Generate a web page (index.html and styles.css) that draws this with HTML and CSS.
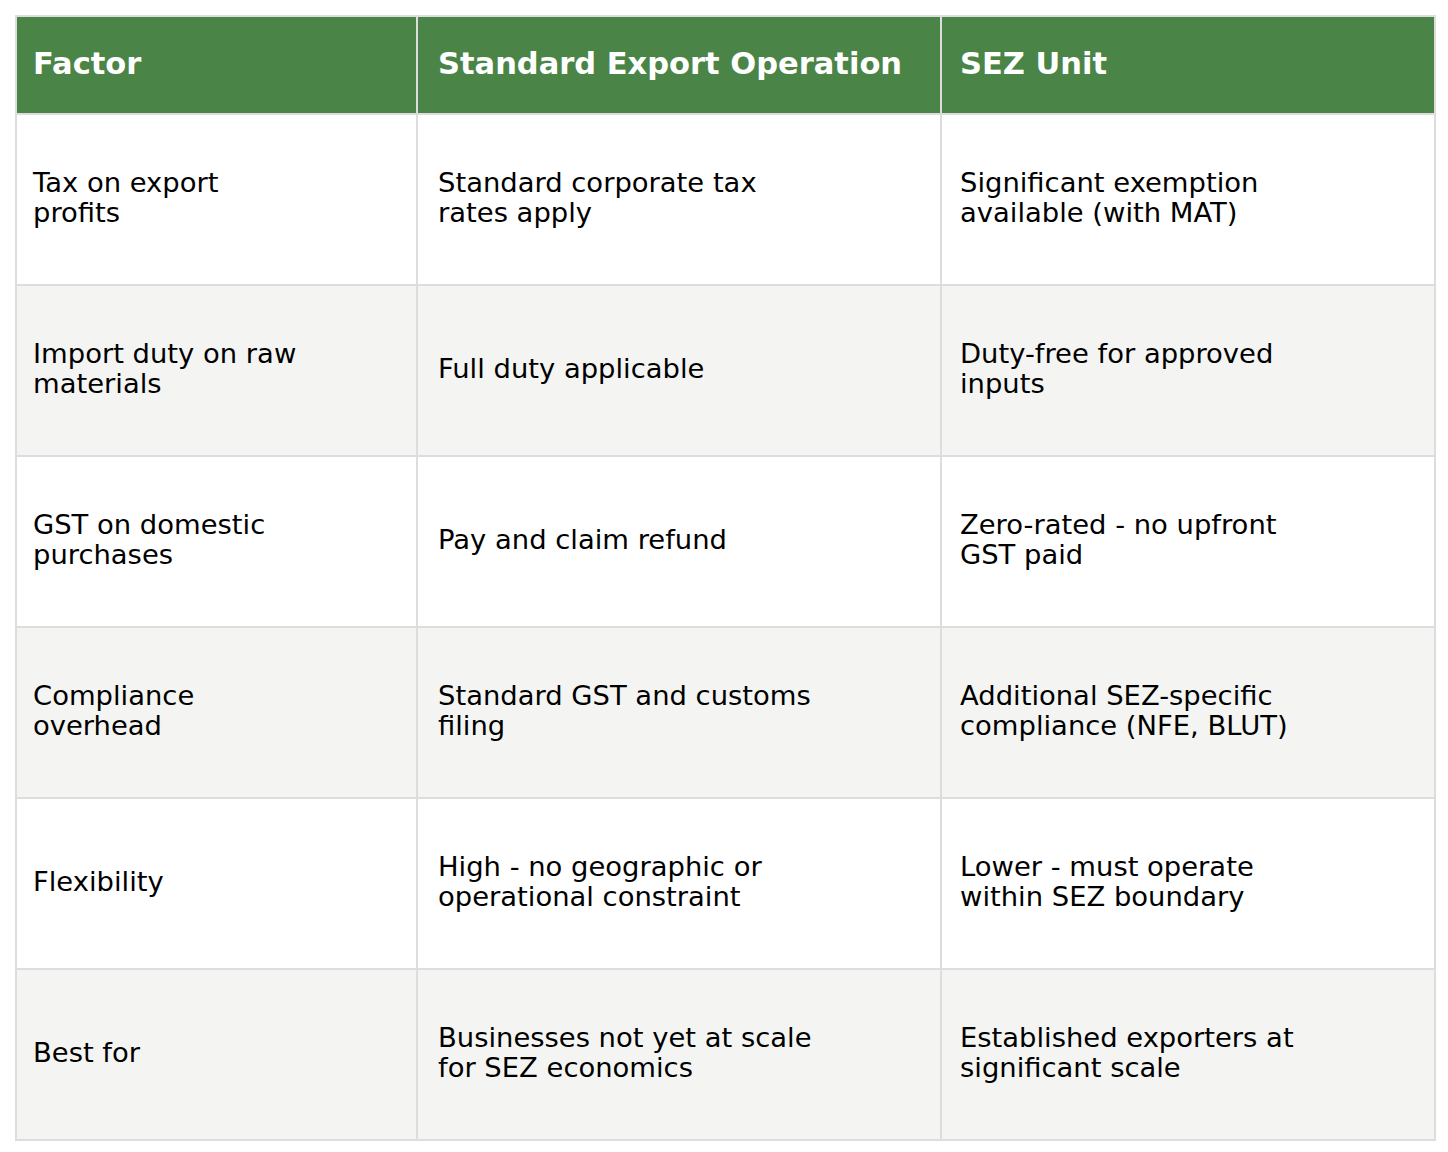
FILE: index.html
```html
<!DOCTYPE html>
<html lang="en">
<head>
<meta charset="utf-8">
<title>Standard Export vs SEZ Unit</title>
<link rel="stylesheet" href="styles.css">
</head>
<body>
<table class="cmp">
  <colgroup>
    <col class="c1">
    <col class="c2">
    <col class="c3">
  </colgroup>
  <thead>
    <tr>
      <th class="p1">Factor</th>
      <th class="p2">Standard Export Operation</th>
      <th class="p3">SEZ Unit</th>
    </tr>
  </thead>
  <tbody>
    <tr>
      <td class="p1">Tax on export<br>profits</td>
      <td class="p2">Standard corporate tax<br>rates apply</td>
      <td class="p3">Significant exemption<br>available (with MAT)</td>
    </tr>
    <tr class="alt">
      <td class="p1">Import duty on raw<br>materials</td>
      <td class="p2">Full duty applicable</td>
      <td class="p3">Duty-free for approved<br>inputs</td>
    </tr>
    <tr>
      <td class="p1">GST on domestic<br>purchases</td>
      <td class="p2">Pay and claim refund</td>
      <td class="p3">Zero-rated - no upfront<br>GST paid</td>
    </tr>
    <tr class="alt">
      <td class="p1">Compliance<br>overhead</td>
      <td class="p2">Standard GST and customs<br>filing</td>
      <td class="p3">Additional SEZ-specific<br>compliance (NFE, BLUT)</td>
    </tr>
    <tr>
      <td class="p1">Flexibility</td>
      <td class="p2">High - no geographic or<br>operational constraint</td>
      <td class="p3">Lower - must operate<br>within SEZ boundary</td>
    </tr>
    <tr class="alt">
      <td class="p1">Best for</td>
      <td class="p2">Businesses not yet at scale<br>for SEZ economics</td>
      <td class="p3">Established exporters at<br>significant scale</td>
    </tr>
  </tbody>
</table>
</body>
</html>
```
FILE: styles.css
```css
html, body {
  margin: 0;
  padding: 0;
  background: #ffffff;
}
body {
  padding: 15px 0 0 15px;
  font-family: "DejaVu Sans", "Liberation Sans", sans-serif;
  color: #000000;
}
.cmp {
  border-collapse: collapse;
  table-layout: fixed;
  width: 1419px;
  border: 2px solid #dcdddc;
}
.c1 { width: 401px; }
.c2 { width: 524px; }
.c3 { width: 494px; }
.cmp th,
.cmp td {
  border: 2px solid #dcdddc;
  text-align: left;
  vertical-align: middle;
  padding-top: 0;
}
.cmp th {
  background: #4a8547;
  color: #ffffff;
  font-weight: bold;
  font-size: 30.5px;
  line-height: 34px;
  height: 94px;
  padding-bottom: 2px;
}
.cmp td {
  font-size: 27.4px;
  line-height: 30px;
  height: 165px;
  padding-bottom: 4px;
  background: #ffffff;
}
.cmp tr.alt td {
  background: #f4f5f3;
}
.p1 { padding-left: 16px; }
.p2 { padding-left: 20px; }
.p3 { padding-left: 18px; }
```
